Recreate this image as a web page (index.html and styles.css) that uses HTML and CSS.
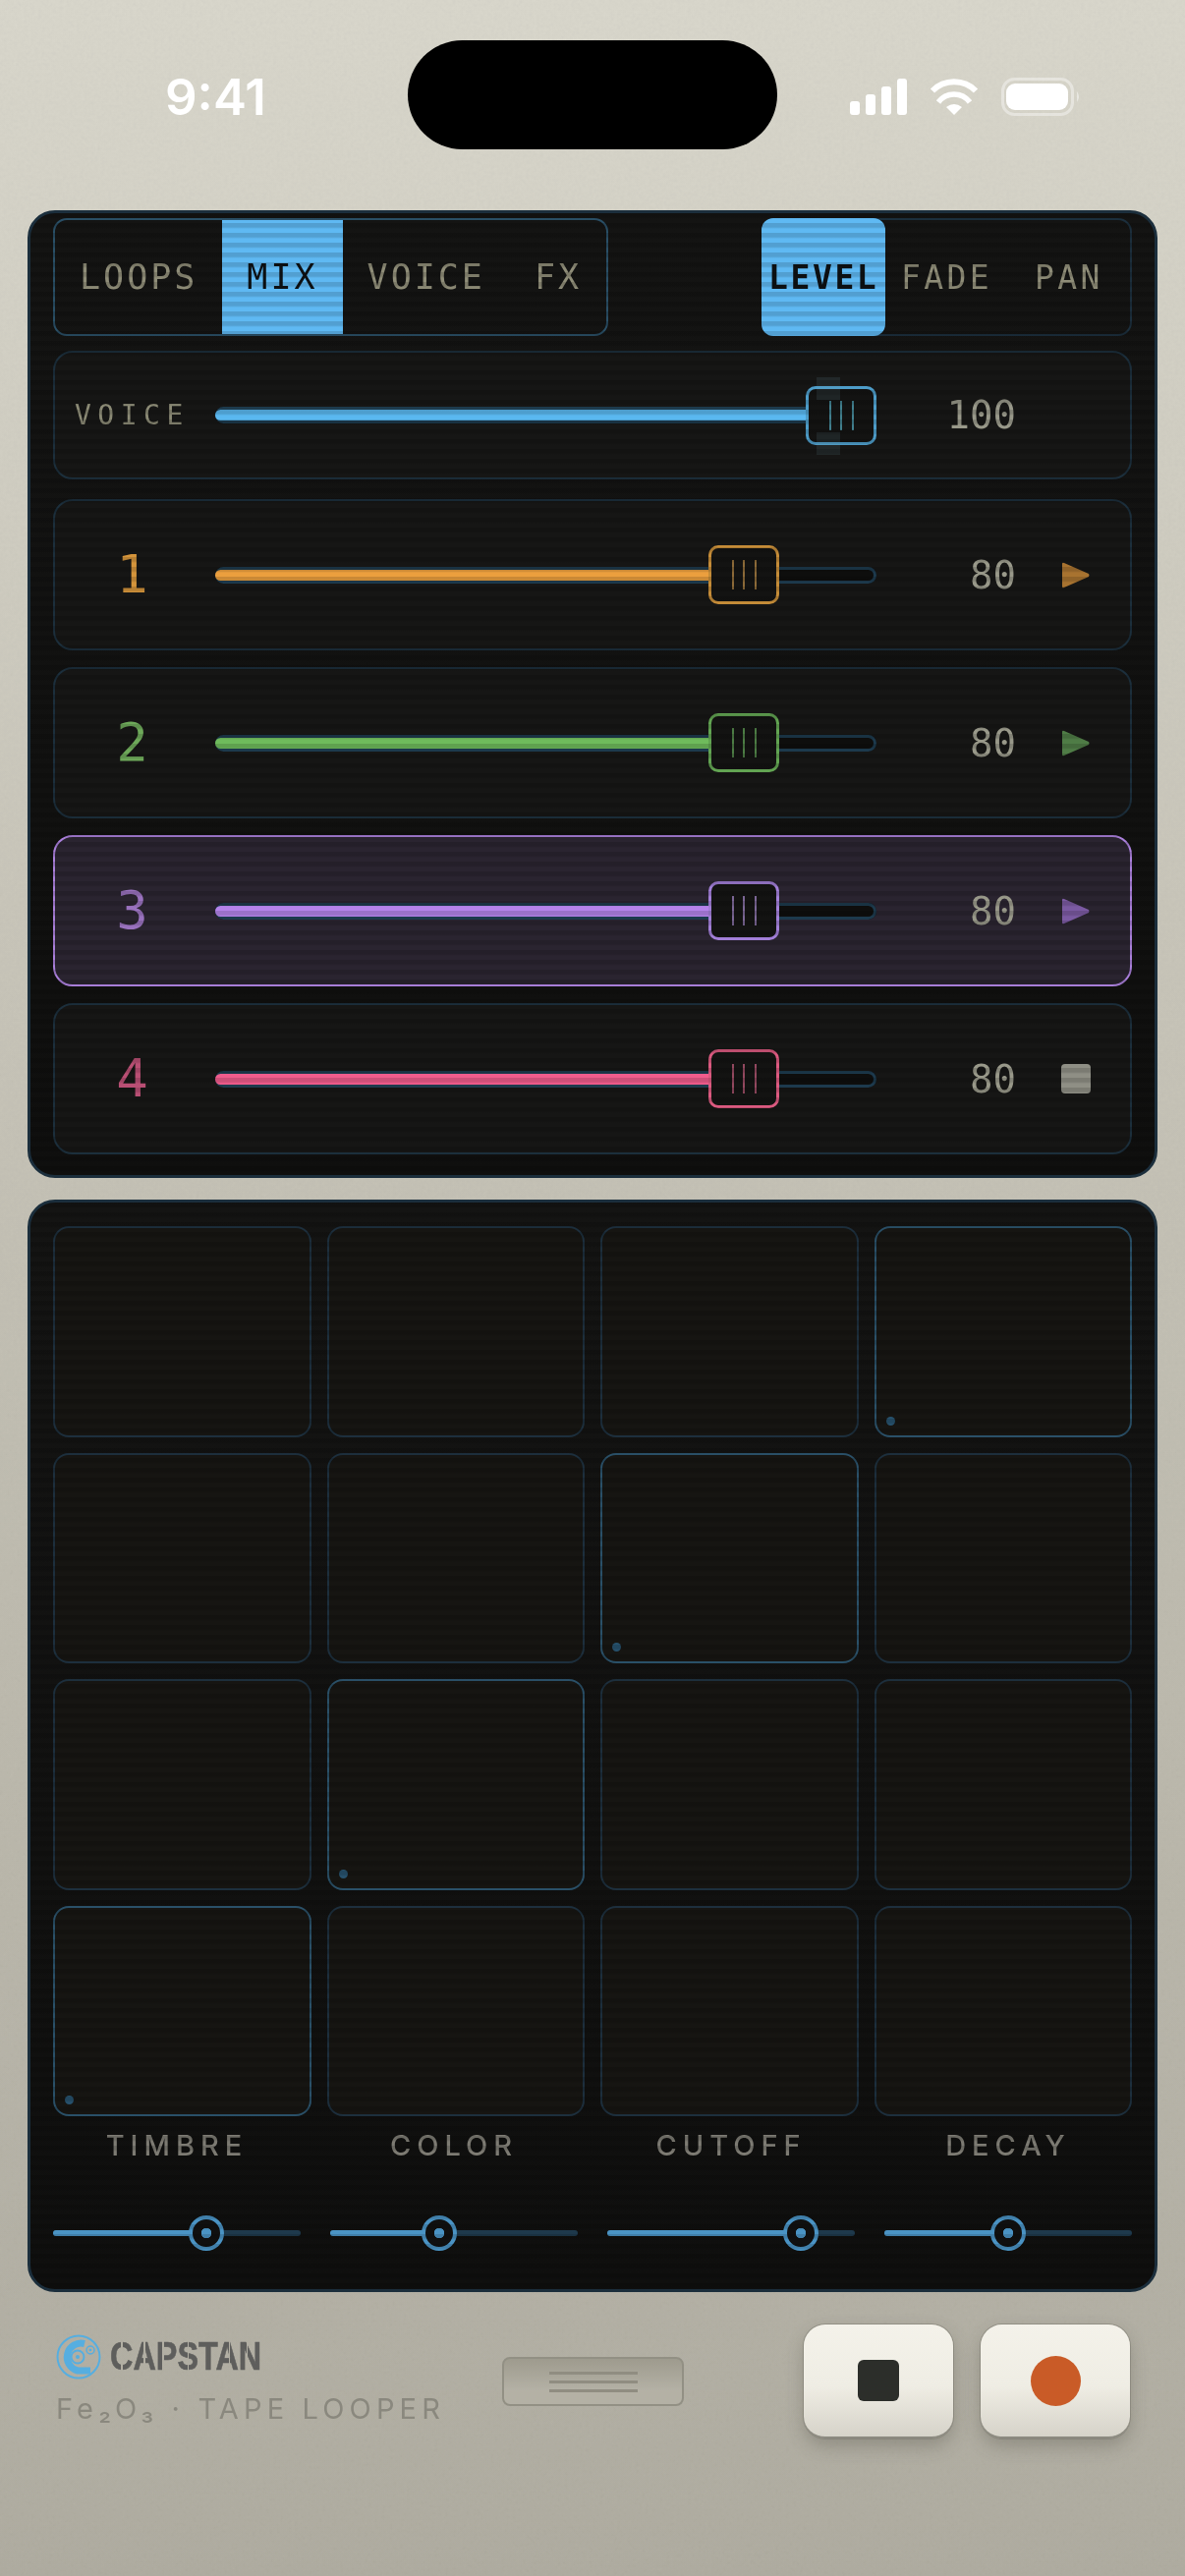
FILE: index.html
```html
<!DOCTYPE html>
<html lang="en">
<head>
  <meta charset="UTF-8" />
  <meta name="viewport" content="width=device-width, initial-scale=1.0"/>
  <title>Capstan</title>
  <link rel="stylesheet" href="styles.css">
</head>
<body>
  <svg class="grain" aria-hidden="true">
    <filter id="grainNoise">
      <feTurbulence type="fractalNoise" baseFrequency="0.28" numOctaves="2" seed="4"/>
      <feColorMatrix type="saturate" values="0"/>
    </filter>
    <rect width="100%" height="100%" filter="url(#grainNoise)"/>
  </svg>

  <header class="status-bar">
    <div class="status-time">9:41</div>
    <div class="island"></div>
    <div class="status-icons">
      <svg width="58" height="37" viewBox="0 0 58 37" fill="#fff">
        <rect x="0" y="23" width="10" height="14" rx="3"/>
        <rect x="16" y="16" width="10" height="21" rx="3"/>
        <rect x="32" y="8" width="10" height="29" rx="3"/>
        <rect x="48" y="0" width="10" height="37" rx="3"/>
      </svg>
      <svg width="50" height="37" viewBox="0 0 50 37" fill="none" stroke="#fff">
        <path d="M3 12.5A31 31 0 0 1 47 12.5" stroke-width="6"/>
        <path d="M9 24A20 20 0 0 1 41 24" stroke-width="5.5"/>
        <path d="M17 29Q25 23 33 29L25 37Z" fill="#fff" stroke="none"/>
      </svg>
      <svg width="81" height="39" viewBox="0 0 81 39" fill="none">
        <rect x="1.5" y="1.5" width="71" height="36" rx="12" stroke="#fff" stroke-opacity="0.4" stroke-width="3"/>
        <rect x="5" y="6" width="63" height="27" rx="9" fill="#fff"/>
        <path d="M77 14Q81 19.5 77 25Z" fill="#fff" fill-opacity="0.45"/>
      </svg>
    </div>
  </header>

  <section class="panel mixer">
    <div class="tab-row">
      <nav class="tabs">
        <span class="tab">LOOPS</span>
        <span class="tab active">MIX</span>
        <span class="tab">VOICE</span>
        <span class="tab">FX</span>
      </nav>
      <nav class="tabs tabs-sub">
        <span class="tab active">LEVEL</span>
        <span class="tab">FADE</span>
        <span class="tab">PAN</span>
      </nav>
    </div>

    <div class="strip voice-strip c-blue">
      <div class="voice-label">VOICE</div>
      <div class="track">
        <div class="fill" style="width: 100%">
          <div class="thumb thumb-end">
            <b class="ghost ghost-top"></b>
            <b class="ghost ghost-bottom"></b>
            <i></i><i></i><i></i>
          </div>
        </div>
      </div>
      <div class="value">100</div>
    </div>

    <div class="strip c-orange">
      <div class="num">1</div>
      <div class="track"><div class="fill" style="width: 80%"><div class="thumb"><i></i><i></i><i></i></div></div></div>
      <div class="value">80</div>
      <svg class="play" width="28" height="27" viewBox="0 0 28 27"><path d="M0 2Q0 0 2 1L27 12Q28 13.500 27 15L2 26Q0 27 0 25Z"/></svg>
    </div>

    <div class="strip c-green">
      <div class="num">2</div>
      <div class="track"><div class="fill" style="width: 80%"><div class="thumb"><i></i><i></i><i></i></div></div></div>
      <div class="value">80</div>
      <svg class="play" width="28" height="27" viewBox="0 0 28 27"><path d="M0 2Q0 0 2 1L27 12Q28 13.500 27 15L2 26Q0 27 0 25Z"/></svg>
    </div>

    <div class="strip selected c-purple">
      <div class="num">3</div>
      <div class="track"><div class="fill" style="width: 80%"><div class="thumb"><i></i><i></i><i></i></div></div></div>
      <div class="value">80</div>
      <svg class="play" width="28" height="27" viewBox="0 0 28 27"><path d="M0 2Q0 0 2 1L27 12Q28 13.500 27 15L2 26Q0 27 0 25Z"/></svg>
    </div>

    <div class="strip c-pink">
      <div class="num">4</div>
      <div class="track"><div class="fill" style="width: 80%"><div class="thumb"><i></i><i></i><i></i></div></div></div>
      <div class="value">80</div>
      <div class="stop-mark"></div>
    </div>
  </section>

  <section class="panel pads-panel">
    <div class="pads">
      <div class="pad"></div>
      <div class="pad"></div>
      <div class="pad"></div>
      <div class="pad lit"></div>
      <div class="pad"></div>
      <div class="pad"></div>
      <div class="pad lit"></div>
      <div class="pad"></div>
      <div class="pad"></div>
      <div class="pad lit"></div>
      <div class="pad"></div>
      <div class="pad"></div>
      <div class="pad lit"></div>
      <div class="pad"></div>
      <div class="pad"></div>
      <div class="pad"></div>
    </div>
    <div class="params">
      <div class="param">
        <div class="param-label">TIMBRE</div>
        <div class="knob-track"><div class="knob-fill" style="width: 62%"><span class="knob"></span></div></div>
      </div>
      <div class="param">
        <div class="param-label">COLOR</div>
        <div class="knob-track"><div class="knob-fill" style="width: 44%"><span class="knob"></span></div></div>
      </div>
      <div class="param">
        <div class="param-label">CUTOFF</div>
        <div class="knob-track"><div class="knob-fill" style="width: 78%"><span class="knob"></span></div></div>
      </div>
      <div class="param">
        <div class="param-label">DECAY</div>
        <div class="knob-track"><div class="knob-fill" style="width: 50%"><span class="knob"></span></div></div>
      </div>
    </div>
  </section>

  <footer class="deck">
    <div class="brand">
      <div class="brand-top">
        <svg width="46" height="46" viewBox="0 0 46 46" fill="none" stroke="#56aee0">
          <circle cx="23" cy="23" r="21.500" stroke-width="2"/>
          <path d="M29 9.500A14 14 0 1 0 22 37H35" stroke-width="7"/>
          <circle cx="22" cy="23" r="6.500" stroke-width="2"/>
          <circle cx="22" cy="23" r="2" fill="#56aee0" stroke="none"/>
          <circle cx="35" cy="16" r="4" stroke-width="1.500"/>
          <circle cx="35" cy="16" r="1.300" fill="#56aee0" stroke="none"/>
        </svg>
        <span class="brand-name">CAPSTAN</span>
      </div>
      <div class="brand-sub">Fe₂O₃ · TAPE LOOPER</div>
    </div>
    <div class="plate"><i></i><i></i><i></i></div>
    <div class="keys">
      <button class="key"><span class="key-stop"></span></button>
      <button class="key"><span class="key-rec"></span></button>
    </div>
  </footer>
</body>
</html>
```

FILE: styles.css
```css
* {
  box-sizing: border-box;
}

body {
  margin: 0;
  width: 1206px;
  height: 2622px;
  position: relative;
  overflow: hidden;
  padding: 0 28px;
  background: linear-gradient(#d9d7cc, #c9c6ba 35%, #b4b1a5 90%, #b0ada1);
  font-family: "DejaVu Sans Mono", monospace;
}

.grain {
  position: absolute;
  left: 0;
  top: 0;
  width: 100%;
  height: 100%;
  opacity: 0.07;
  mix-blend-mode: multiply;
}

/* status bar */

.status-bar {
  position: relative;
  display: grid;
  grid-template-columns: 387px 376px 1fr;
  align-items: center;
  height: 111px;
  margin-top: 41px;
  margin-bottom: 62px;
}

.status-time {
  padding-left: 140px;
  padding-top: 3px;
  font-family: Inter, sans-serif;
  font-size: 51px;
  font-weight: 600;
  color: #fff;
}

.island {
  height: 111px;
  background: #000;
  border-radius: 56px;
}

.status-icons {
  display: flex;
  align-items: center;
  gap: 23px;
  padding-left: 74px;
  padding-top: 3px;
}

/* panels */

.panel {
  position: relative;
  border: 3px solid #1b2e3c;
  border-radius: 28px;
  background: linear-gradient(#141413, #0f0f0e);
}

/* scanlines sit over the whole panel */
.panel::after {
  content: "";
  position: absolute;
  inset: 0;
  border-radius: 25px;
  background: repeating-linear-gradient(rgba(0, 0, 0, 0.14) 0 4px, rgba(0, 0, 0, 0) 6px 8px, rgba(0, 0, 0, 0) 10px);
  pointer-events: none;
}

.mixer {
  height: 985px;
  padding: 5px 23px 21px;
}

.tab-row {
  display: flex;
  justify-content: space-between;
  margin-bottom: 15px;
}

.tabs {
  display: flex;
  height: 120px;
  border: 2px solid #2a4f66;
  border-radius: 14px;
}

.tab {
  display: flex;
  align-items: center;
  justify-content: center;
  padding: 0 25px;
  font-size: 35px;
  letter-spacing: 3px;
  color: #8f8d78;
}

.tab.active {
  background: #5fb9f3;
  color: #0d1114;
}

.tabs-sub {
  display: grid;
  grid-template-columns: repeat(3, 1fr);
  width: 377px;
  border-color: #1c2f3d;
}

.tabs-sub .tab {
  padding: 0;
  font-size: 33px;
  letter-spacing: 3.400px;
}

.tabs-sub .tab.active {
  margin: -2px 0 -2px -2px;
  border-radius: 12px;
  font-weight: 700;
  letter-spacing: 2.600px;
}

/* mixer strips */

.strip {
  display: grid;
  grid-template-columns: 163px 673px 142px 1fr;
  align-items: center;
  height: 154px;
  margin-bottom: 17px;
  border: 2px solid #1c2f3c;
  border-radius: 20px;
  background: #161615;
}

.strip:last-child {
  margin-bottom: 0;
}

.voice-strip {
  height: 131px;
  margin-bottom: 20px;
}

.strip.selected {
  border-color: #ab80dc;
  background: #2a2430;
}

.c-blue { --c: #5ab8f0; --thumb: #4d9cc8; --grip: #41808f; }
.c-orange { --c: #eb9f3e; --num: #d5953b; --thumb: #c58c38; --grip: #8c6a38; --play: #a87330; }
.c-green { --c: #6fbb5c; --num: #6ea95a; --thumb: #62a452; --grip: #4c7c44; --play: #4f7c46; }
.c-purple { --c: #b483ea; --num: #9a72bf; --thumb: #a27fd8; --grip: #7c6796; --play: #7b5aa2; }
.c-pink { --c: #ef5c8c; --num: #b94f74; --thumb: #dc5a80; --grip: #93485f; }

.num {
  padding-right: 6px;
  text-align: center;
  font-size: 54px;
  line-height: 1;
  color: var(--num);
}

.voice-label {
  padding-left: 20px;
  font-size: 28px;
  letter-spacing: 6.500px;
  color: #8c8b76;
}

.track {
  position: relative;
  height: 17px;
  border-radius: 9px;
  background: #0e0e0d;
  box-shadow: inset 0 0 0 3px #1d3a4d;
}

.fill {
  position: absolute;
  left: 0;
  top: 3px;
  bottom: 3px;
  border-radius: 6px 0 0 6px;
  background: var(--c);
}

/* thumb straddles the end of the fill */
.thumb {
  position: absolute;
  right: -36px;
  top: 50%;
  display: flex;
  align-items: center;
  justify-content: center;
  gap: 9.500px;
  width: 72px;
  height: 60px;
  margin-top: -30px;
  border: 3px solid var(--thumb);
  border-radius: 10px;
  background: #131312;
}

.thumb-end {
  right: 0;
}

.thumb i {
  width: 2px;
  height: 30px;
  background: var(--grip);
}

.ghost {
  position: absolute;
  left: 8px;
  width: 24px;
  height: 23px;
  background: rgba(120, 170, 190, 0.12);
}

.ghost-top {
  top: -12px;
}

.ghost-bottom {
  bottom: -13px;
}

.value {
  text-align: right;
  font-size: 39px;
  line-height: 1;
  color: #99998a;
}

.play {
  margin-left: 47px;
  fill: var(--play);
}

.stop-mark {
  width: 30px;
  height: 30px;
  margin-left: 46px;
  border-radius: 4px;
  background: #8f8f85;
}

/* pads */

.pads-panel {
  height: 1112px;
  margin-top: 22px;
  padding: 24px 23px 0;
}

.pads {
  display: grid;
  grid-template-columns: repeat(4, 1fr);
  grid-auto-rows: 214.500px;
  gap: 16px;
}

.pad {
  position: relative;
  border: 2px solid #1d2f3d;
  border-radius: 16px;
  background: #161512;
}

.pad.lit {
  border-color: #2a5068;
}

.pad.lit::before {
  content: "";
  position: absolute;
  left: 10px;
  bottom: 10px;
  width: 9px;
  height: 9px;
  border-radius: 50%;
  background: #27526e;
}

.params {
  display: grid;
  grid-template-columns: repeat(4, 1fr);
  gap: 30px;
  margin-top: 12px;
}

.param-label {
  margin-bottom: 68px;
  text-align: center;
  font-family: Inter, sans-serif;
  font-size: 29px;
  font-weight: 500;
  line-height: 36px;
  letter-spacing: 6px;
  color: #7d7b73;
}

.knob-track {
  position: relative;
  height: 6px;
  border-radius: 3px;
  background: #1e394c;
}

.knob-fill {
  position: absolute;
  left: 0;
  top: 0;
  bottom: 0;
  border-radius: 3px;
  background: #4a93c4;
}

.knob {
  position: absolute;
  right: -18px;
  top: -15px;
  width: 36px;
  height: 36px;
  border: 4px solid #4a93c4;
  border-radius: 50%;
  background: radial-gradient(circle, #4a93c4 0 5px, #101010 5.500px);
}

/* footer */

.deck {
  position: relative;
  display: flex;
  align-items: center;
  height: 116px;
  margin-top: 33px;
  padding-left: 29px;
}

.brand {
  width: 454px;
  margin-top: -3px;
}

.brand-top {
  display: flex;
  align-items: center;
  gap: 9px;
  height: 46px;
}

/* no stencil face installed: squeeze Liberation Sans Bold and cut the slits with a mask */
.brand-name {
  display: inline-block;
  font-family: "Liberation Sans", sans-serif;
  font-size: 40px;
  font-weight: 700;
  color: #5e5e5c;
  transform: scaleX(0.81);
  transform-origin: left center;
  -webkit-text-stroke: 0.6px #5e5e5c;
  -webkit-mask-image: linear-gradient(90deg, #000 14px, transparent 14px 16px, #000 16px 42px, transparent 42px 44px, #000 44px 66px, transparent 66px 68px, #000 68px 97px, transparent 97px 99px, #000 99px 149px, transparent 149px 151px, #000 151px 171px, transparent 171px 173px, #000 173px);
  mask-image: linear-gradient(90deg, #000 14px, transparent 14px 16px, #000 16px 42px, transparent 42px 44px, #000 44px 66px, transparent 66px 68px, #000 68px 97px, transparent 97px 99px, #000 99px 149px, transparent 149px 151px, #000 151px 171px, transparent 171px 173px, #000 173px);
}

.brand-sub {
  margin-top: 12px;
  font-family: Inter, sans-serif;
  font-size: 29px;
  line-height: 36px;
  letter-spacing: 5.150px;
  white-space: nowrap;
  color: #8a887e;
}

.plate {
  display: flex;
  flex-direction: column;
  align-items: center;
  justify-content: center;
  gap: 6px;
  width: 185px;
  height: 50px;
  border: 2px solid #929084;
  border-radius: 8px;
  background: linear-gradient(#9e9b8e, #b4b1a5 70%);
}

.plate i {
  width: 90px;
  height: 3px;
  background: #908d81;
}

.keys {
  display: flex;
  gap: 28px;
  margin-left: 122px;
}

.key {
  display: flex;
  align-items: center;
  justify-content: center;
  width: 152px;
  height: 116px;
  padding: 0;
  border: 0;
  border-bottom: 2px solid #8c8a80;
  border-radius: 22px;
  background: linear-gradient(#f4f2ea, #efede4 55%, #d6d3c9);
  box-shadow: 0 0 0 1px rgba(120, 118, 108, 0.5), 0 8px 18px rgba(70, 68, 60, 0.3);
}

.key-stop {
  width: 42px;
  height: 42px;
  border-radius: 6px;
  background: #2c2e2a;
}

.key-rec {
  width: 51px;
  height: 51px;
  border-radius: 50%;
  background: #c95b27;
}
```
